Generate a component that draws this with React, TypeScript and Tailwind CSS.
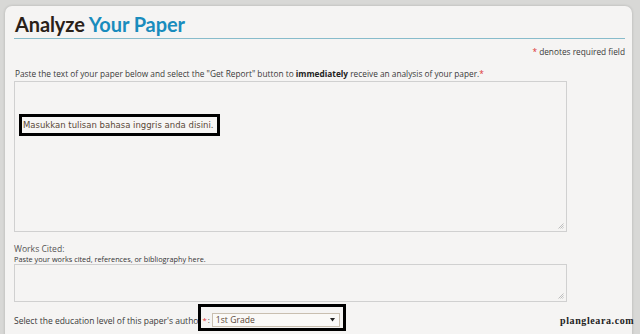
import React from 'react';

// Grip kecil di pojok kanan bawah kotak teks
const Grip = () => (
  <svg width="6" height="6" viewBox="0 0 6 6" className="absolute right-[2px] bottom-[2px]">
    <path d="M5.5 0.5 L0.5 5.5 M5.5 2.5 L2.5 5.5 M5.5 4.5 L4.5 5.5" stroke="#b8b8b8" strokeWidth="0.9" />
  </svg>
);

const Box = ({ className, children }: { className: string; children?: React.ReactNode }) => (
  <div className={`relative border border-[#d0d0d0] bg-[#f5f4f3] ${className}`}>
    {children}
    <Grip />
  </div>
);

export default function App() {
  return (
    <div
      className="w-[640px] h-[334px] overflow-hidden bg-[#d8d8d6] pt-[6px] pl-[5px] pr-[8px]"
      style={{ fontFamily: '"Open Sans", "DejaVu Sans", sans-serif' }}
    >
      <div className="relative h-[340px] rounded-t-[7px] bg-[#f5f4f3] shadow-[0_0_3px_rgba(0,0,0,0.18)] pl-[9px] pr-[7px]">
        {/* Judul */}
        <h1
          className="pt-[6px] pl-[1px] text-[20px] font-bold leading-[24px] tracking-[-0.1px]"
          style={{ fontFamily: 'Lato, "Open Sans", sans-serif' }}
        >
          <span className="text-[#2a2119]">Analyze</span>{' '}
          <span className="text-[#198cbd]">Your Paper</span>
        </h1>
        <div className="mt-[2px] h-px bg-[#88bccb]" />

        <p className="mt-[8px] text-right text-[8.3px] leading-[10px] text-[#3a3a3a]">
          <span className="text-[#d33]">*</span> denotes required field
        </p>

        <p className="mt-[12px] pl-[1px] text-[8.3px] leading-[10px] text-[#3a3a3a] whitespace-nowrap">
          Paste the text of your paper below and select the "Get Report" button to{' '}
          <b className="text-[#222]">immediately</b> receive an analysis of your paper.
          <span className="text-[#d33]">*</span>
        </p>

        {/* Kotak tulisan utama */}
        <Box className="mt-[2px] w-[553px] h-[151px]">
          <div className="absolute left-[4px] top-[32px] border-[3px] border-black bg-[#f7f6f5] pl-[1px] h-[22px] w-[201px] flex items-center">
            <span
              className="text-[8.5px] leading-[10px] text-[#5a4838] whitespace-nowrap"
              style={{ fontFamily: '"DejaVu Sans", sans-serif' }}
            >
              Masukkan tulisan bahasa inggris anda disini.
            </span>
          </div>
        </Box>

        <p className="mt-[12px] text-[8.6px] leading-[10px] text-[#555]">Works Cited:</p>
        <p className="mt-[1px] text-[7.3px] leading-[9px] text-[#333] whitespace-nowrap">
          Paste your works cited, references, or bibliography here.
        </p>
        <Box className="w-[553px] h-[38px]" />

        {/* Pilihan tingkat pendidikan */}
        <div className="mt-[2px] flex items-start text-[8.5px] text-[#3a3a3a]">
          <span className="mt-[12px] leading-[10px] whitespace-nowrap">
            Select the education level of this paper's autho
          </span>
          <div className="h-[27px] w-[148px] shrink-0 border-[3px] border-black bg-[#f5f4f3] flex items-start pt-[6px] pl-[1px] text-[7.8px]">
            <span className="text-[#d33] leading-[10px] mt-[2px]">*</span>
            <span className="ml-[1px] leading-[10px] mt-[2px]">:</span>
            <div className="ml-[2px] w-[128px] h-[14px] border border-[#c9bfb0] bg-[#faf9f7] flex items-center justify-between pl-[3px] pr-[4px]">
              <span className="text-[8.6px] leading-[10px] text-[#5a4838]">1st Grade</span>
              <svg width="5" height="4" viewBox="0 0 5 4">
                <path d="M0 0 H5 L2.5 3.5 Z" fill="#222" />
              </svg>
            </div>
          </div>
        </div>

        <span
          className="absolute left-[555px] top-[309px] text-[10px] leading-[12px] font-bold text-[#222] tracking-[0.6px]"
          style={{ fontFamily: '"Liberation Serif", serif' }}
        >
          plangleara.com
        </span>
      </div>
    </div>
  );
}
